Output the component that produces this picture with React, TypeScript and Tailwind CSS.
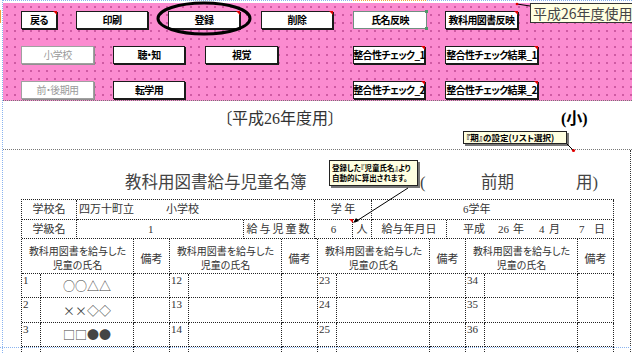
import React from "react"

// ─── Sheet button ────────────────────────────────────────────────────────────

type BtnProps = {
  label:     string
  className: string
  muted?:    boolean
  flag?:     boolean
  selected?: boolean
}

function Btn({ label, className, muted = false, flag = false, selected = false }: BtnProps) {
  const tone = selected
    ? "border-[#6f8f80] text-black font-bold"
    : muted
    ? "border-[#a0a0a0] shadow-[1px_1px_0_#909090] text-[#9a9a9a] font-normal"
    : "border-[#1a1a1a] shadow-[1px_1px_0_#1a1a1a] text-black font-bold"

  return (
    <div className={`relative flex h-[18px] shrink-0 items-center justify-center whitespace-nowrap border bg-white text-[10px] leading-none tracking-[-0.6px] ${tone} ${className}`}>
      {label}
      {flag && (
        <span className="absolute -top-px -right-px h-0 w-0 border-t-[4px] border-l-[4px] border-t-[#e00000] border-l-transparent" />
      )}
      {selected && (
        <>
          <span className="absolute -top-[2px] -right-[2px] h-[3px] w-[3px] bg-[#4f9a6a]" />
          <span className="absolute -bottom-[2px] -right-[2px] h-[3px] w-[3px] bg-[#4f9a6a]" />
        </>
      )}
    </div>
  )
}

const cell = "border-r border-b border-dotted border-[#222]"

const symbols = ["○○△△", "××◇◇", "□□●●"]
const rowHeights = ["h-[24px]", "h-[25px]", "h-[24px]", "h-[25px]"]

// ─── Page ────────────────────────────────────────────────────────────────────

export default function App() {
  return (
    <div className="relative h-[353px] w-[632px] overflow-hidden bg-white pl-[2px] font-['Noto_Sans_CJK_JP',sans-serif] [font-feature-settings:'palt']">
      <div className="flex h-full flex-col border-l border-t border-dotted border-[#8ab4f0]">
        <div className="h-[2px] shrink-0" />

        {/* ── Pink button panel ── */}
        <div className="flex h-[98px] shrink-0 flex-col gap-[17px] border-b border-dotted border-[#777] bg-[#fb8bd0] pt-[8px] [background-image:radial-gradient(circle,#cf5aa3_0.8px,transparent_1.2px)] [background-size:8px_8px]">
          <div className="flex">
            <Btn label="戻る" className="ml-[18px] w-[36px]" flag />
            <Btn label="印刷" className="ml-[19px] w-[72px]" />
            <Btn label="登録" className="ml-[20px] w-[72px]" flag />
            <Btn label="削除" className="ml-[21px] w-[72px]" flag />
            <Btn label="氏名反映" className="ml-[20px] w-[74px]" selected />
            <Btn label="教科用図書反映" className="ml-[18px] w-[73px]" flag />
          </div>
          <div className="flex">
            <Btn label="小学校" className="ml-[18px] w-[73px]" muted />
            <Btn label="聴・知" className="ml-[19px] w-[72px]" />
            <Btn label="視覚" className="ml-[20px] w-[73px]" />
            <Btn label="整合性チェック_1" className="ml-[75px] w-[72px]" flag />
            <Btn label="整合性チェック結果_1" className="ml-[20px] w-[93px]" flag />
          </div>
          <div className="flex">
            <Btn label="前・後期用" className="ml-[18px] w-[73px]" muted />
            <Btn label="転学用" className="ml-[19px] w-[72px]" />
            <Btn label="整合性チェック_2" className="ml-[168px] w-[72px]" flag />
            <Btn label="整合性チェック結果_2" className="ml-[20px] w-[93px]" flag />
          </div>
        </div>

        {/* ── Year heading ── */}
        <div className="flex h-[49px] shrink-0 items-start border-b border-dotted border-[#777] pt-[8px] font-['Liberation_Serif','Noto_Sans_CJK_JP',serif]">
          <span className="ml-[221px] w-[310px] text-[16px] leading-[20px] text-[#333]">〔平成26年度用〕</span>
          <span className="ml-[27px] text-[16px] font-bold leading-[20px] text-black">(小)</span>
        </div>

        {/* ── Register sheet ── */}
        <div className="flex w-[628px] flex-1 flex-col border-r border-dotted border-[#333] pt-[23px] font-['Liberation_Serif','Noto_Sans_CJK_JP',serif] text-[#333]">
          <div className="flex h-[20px] shrink-0 items-center text-[16.5px] leading-[20px] text-[#444]">
            <span className="ml-[122px] w-[295px]">教科用図書給与児童名簿</span>
            <span className="w-[61px]">(</span>
            <span className="w-[95px]">前期</span>
            <span>用)</span>
          </div>

          <div className="ml-[18px] mt-[6px] w-[593px] shrink-0 border-l border-t border-dotted border-[#222] text-[11px] leading-[13px]">
            {/* row: school */}
            <div className="flex h-[20px]">
              <div className={`${cell} flex w-[55px] items-center justify-center`}>学校名</div>
              <div className={`${cell} flex w-[238px] items-center pl-[2px]`}>
                <span className="w-[87px]">四万十町立</span>
                <span>小学校</span>
              </div>
              <div className={`${cell} flex w-[57px] items-center justify-center`}>学 年</div>
              <div className={`${cell} flex w-[242px] items-center pl-[91px]`}>6学年</div>
            </div>

            {/* row: class */}
            <div className="flex h-[19px]">
              <div className={`${cell} flex w-[55px] items-center justify-center`}>学級名</div>
              <div className={`${cell} flex w-[167px] items-center pl-[71px]`}>1</div>
              <div className={`${cell} flex w-[71px] items-center justify-center tracking-[2px]`}>給与児童数</div>
              <div className={`${cell} relative flex w-[38px] items-center justify-center`}>
                6
                <span className="absolute -top-px -right-px h-0 w-0 border-t-[4px] border-l-[4px] border-t-[#e00000] border-l-transparent" />
              </div>
              <div className={`${cell} flex w-[19px] items-center justify-center`}>人</div>
              <div className={`${cell} flex w-[75px] items-center justify-center`}>給与年月日</div>
              <div className={`${cell} flex w-[167px] items-center pl-[16px]`}>
                <span className="w-[35px]">平成</span>
                <span className="w-[15px]">26</span>
                <span className="w-[26px]">年</span>
                <span className="w-[10px]">4</span>
                <span className="w-[30px]">月</span>
                <span className="w-[15px]">7</span>
                <span>日</span>
              </div>
            </div>

            {/* row: column headings */}
            <div className="flex h-[35px]">
              {[0, 1, 2, 3].map((g) => (
                <React.Fragment key={g}>
                  <div className={`${cell} flex w-[112px] flex-col items-center justify-end text-[10px] leading-[14px]`}>
                    <span>教科用図書を給与した</span>
                    <span>児童の氏名</span>
                  </div>
                  <div className={`${cell} flex w-[36px] items-center justify-center pt-[6px]`}>備考</div>
                </React.Fragment>
              ))}
            </div>

            {/* rows: pupils */}
            {[0, 1, 2, 3].map((r) => (
              <div key={r} className={`flex ${rowHeights[r]}`}>
                {[0, 1, 2, 3].map((g) => (
                  <React.Fragment key={g}>
                    <div className={`${cell} w-[19px] pl-px`}>{r < 3 ? g * 11 + r + 1 : ""}</div>
                    <div className={`${cell} flex w-[93px] items-center justify-center font-['Noto_Sans_CJK_JP',sans-serif] text-[12px] text-[#444] [font-feature-settings:normal]`}>
                      {g === 0 && r < 3 ? symbols[r] : ""}
                    </div>
                    <div className={`${cell} w-[36px]`} />
                  </React.Fragment>
                ))}
              </div>
            ))}
          </div>
        </div>
      </div>

      {/* ── Cell comments ── */}
      <div className="absolute left-[530px] top-[3px] flex h-[20px] items-center whitespace-nowrap border border-[#333] bg-[#ffffe1] pl-[2px] text-[14px] leading-none text-[#444] [font-feature-settings:normal]">
        平成26年度使用
      </div>

      <div className="absolute left-[463px] top-[131px] flex h-[13px] w-[104px] items-center whitespace-nowrap border border-[#222] bg-[#ffffe1] pl-[2px] text-[8.5px] font-bold leading-none text-black shadow-[2px_2px_0_#777]">
        『期』の設定(リスト選択)
      </div>

      <div className="absolute left-[329px] top-[160px] flex h-[26px] w-[89px] flex-col justify-center whitespace-nowrap border border-[#222] bg-[#ffffe1] pl-[2px] text-[7.5px] font-bold leading-[10px] text-black shadow-[2px_2px_0_#777]">
        <span>登録した『児童氏名』より</span>
        <span>自動的に算出されます。</span>
      </div>

      {/* ── Drawing layer: ellipse, comment leaders, page breaks ── */}
      <svg className="pointer-events-none absolute left-0 top-0" width="632" height="353" viewBox="0 0 632 353">
        <ellipse cx="204" cy="18.5" rx="46" ry="15.5" fill="none" stroke="#000" strokeWidth="3" />
        <line x1="567" y1="144" x2="573" y2="150" stroke="#000" strokeWidth="1" />
        <circle cx="573.5" cy="150.5" r="1.6" fill="#e00000" />
        <line x1="408" y1="188" x2="355" y2="222" stroke="#000" strokeWidth="1" />
        <polygon points="353,223 356,218 359,221" fill="#000" />
        <line x1="0" y1="347.5" x2="632" y2="347.5" stroke="#8ab4f0" strokeWidth="1" strokeDasharray="1 1" />
        <line x1="353" y1="0.5" x2="427" y2="0.5" stroke="#f0a040" strokeWidth="1" strokeDasharray="1 1" />
        <line x1="0.5" y1="10" x2="0.5" y2="23" stroke="#f0a040" strokeWidth="1" />
        <line x1="517" y1="4" x2="530" y2="6" stroke="#000" strokeWidth="1" />
        <circle cx="517" cy="4" r="1.3" fill="#e00000" />
      </svg>
    </div>
  )
}
